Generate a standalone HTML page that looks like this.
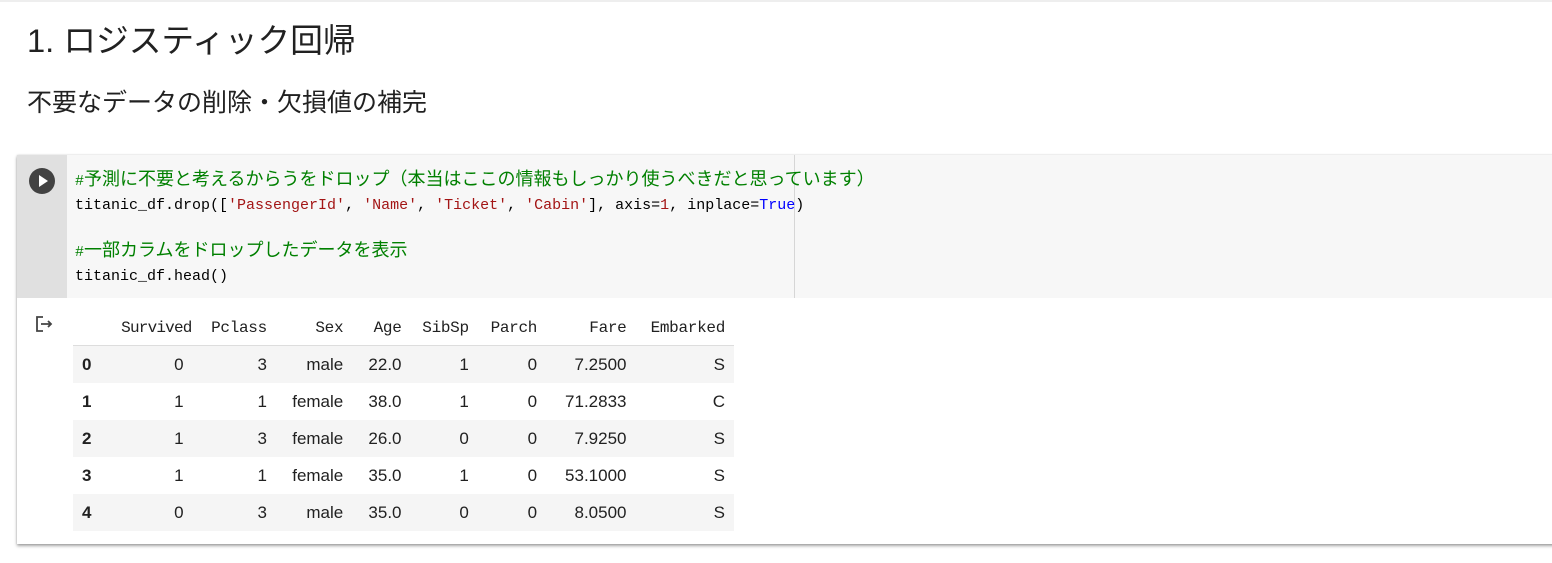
<!DOCTYPE html>
<html><head><meta charset="utf-8"><style>
body{margin:0;width:1552px;height:563px;background:#fff;position:relative;overflow:hidden;font-family:"Liberation Sans","Noto Sans CJK JP",sans-serif;color:#212121}
.top{position:absolute;left:0;top:0;width:1552px;height:2px;background:#eee}
h1{position:absolute;left:27px;top:19px;margin:0;font-weight:400;font-size:32.7px;line-height:44px;color:#212121}
.sub{position:absolute;left:27px;top:86px;font-size:25px;line-height:34px;color:#212121}
.cell{position:absolute;left:17px;top:155px;width:1540px;height:389px;background:#fff;box-shadow:0 2px 3px rgba(0,0,0,.35),0 0 2px rgba(0,0,0,.15)}
.gut{position:absolute;left:0;top:0;width:50px;height:143px;background:#e0e0e0}
.code{position:absolute;left:50px;top:0;right:0;height:143px;background:#f7f7f7}
.ruler{position:absolute;left:727px;top:0;width:1px;height:143px;background:#d6d6d6}
.run{position:absolute;left:12px;top:13px;width:26px;height:26px;border-radius:50%;background:#424242}
.run:after{content:"";position:absolute;left:10px;top:7px;border-left:9px solid #fff;border-top:6px solid transparent;border-bottom:6px solid transparent}
pre{position:absolute;left:8px;top:15px;margin:0;font-family:"Liberation Mono","Noto Sans CJK JP",monospace;font-size:15px;line-height:23.7px;color:#000}
.c{color:#008000}.c span{font-size:18px}
.s{color:#a31515}.k{color:#0000ff}
.out{position:absolute;left:18px;top:160px;width:18px;height:18px}
table{position:absolute;left:56px;top:155px;border-collapse:collapse;font-size:17px;table-layout:fixed;width:661px}
th,td{text-align:right;padding:0 9px;height:37px;white-space:nowrap;overflow:visible}
thead th{font-family:"Liberation Mono","Noto Sans CJK JP",monospace;font-weight:400;font-size:16px;letter-spacing:-0.3px;border-bottom:1px solid #ddd;height:35px}
thead th.sv{letter-spacing:-0.8px}
tbody th{text-align:left;font-weight:700}
tbody tr:nth-child(odd){background:#f5f5f5}
</style></head><body>
<div class="top"></div>
<h1>1. ロジスティック回帰</h1>
<div class="sub">不要なデータの削除・欠損値の補完</div>
<div class="cell">
<div class="gut"><div class="run"></div></div>
<div class="code"><div class="ruler"></div>
<pre><span class="c">#<span>予測に不要と考えるからうをドロップ（本当はここの情報もしっかり使うべきだと思っています）</span></span>
titanic_df.drop([<span class="s">'PassengerId'</span>, <span class="s">'Name'</span>, <span class="s">'Ticket'</span>, <span class="s">'Cabin'</span>], axis=<span class="s">1</span>, inplace=<span class="k">True</span>)

<span class="c">#<span>一部カラムをドロップしたデータを表示</span></span>
titanic_df.head()</pre></div>
<svg class="out" viewBox="0 0 18 18"><path d="M8 2H2v14h6M6 9h10M13 6l3 3-3 3" fill="none" stroke="#444" stroke-width="1.8"/></svg>
<table>
<colgroup><col style="width:39px"><col style="width:80px"><col style="width:83px"><col style="width:76px"><col style="width:58px"><col style="width:67px"><col style="width:68px"><col style="width:89px"><col style="width:98px"></colgroup>
<thead><tr><th></th><th class="sv">Survived</th><th>Pclass</th><th>Sex</th><th>Age</th><th>SibSp</th><th>Parch</th><th>Fare</th><th>Embarked</th></tr></thead>
<tbody>
<tr><th>0</th><td>0</td><td>3</td><td>male</td><td>22.0</td><td>1</td><td>0</td><td>7.2500</td><td>S</td></tr>
<tr><th>1</th><td>1</td><td>1</td><td>female</td><td>38.0</td><td>1</td><td>0</td><td>71.2833</td><td>C</td></tr>
<tr><th>2</th><td>1</td><td>3</td><td>female</td><td>26.0</td><td>0</td><td>0</td><td>7.9250</td><td>S</td></tr>
<tr><th>3</th><td>1</td><td>1</td><td>female</td><td>35.0</td><td>1</td><td>0</td><td>53.1000</td><td>S</td></tr>
<tr><th>4</th><td>0</td><td>3</td><td>male</td><td>35.0</td><td>0</td><td>0</td><td>8.0500</td><td>S</td></tr>
</tbody></table>
</div>
</body></html>
